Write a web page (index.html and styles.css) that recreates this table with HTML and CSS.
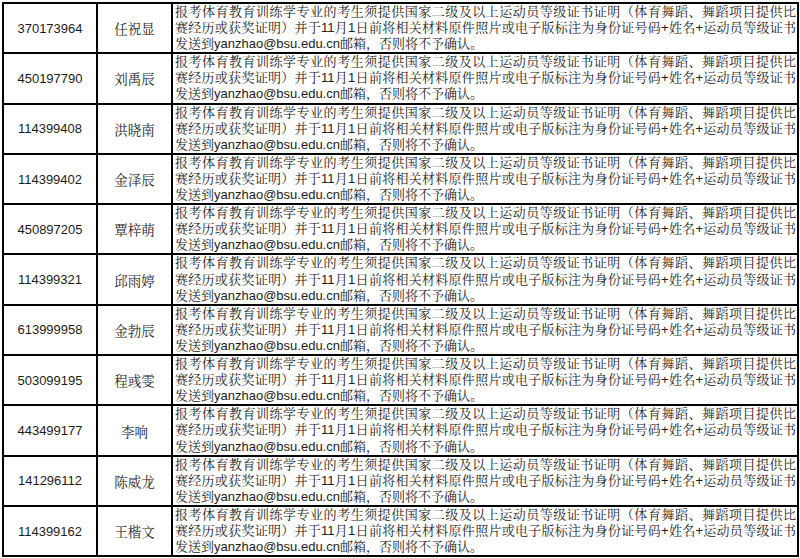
FILE: index.html
```html
<!DOCTYPE html>
<html lang="zh-CN">
<head>
<meta charset="utf-8">
<title>名单</title>
<link rel="stylesheet" href="styles.css">
</head>
<body>
<table class="list">
<colgroup><col class="c-id"><col class="c-name"><col class="c-note"></colgroup>
<tbody>
<tr><td class="id">370173964</td><td class="name">任祝显</td><td class="note"><div class="ln j">报考体育教育训练学专业的考生须提供国家二级及以上运动员等级证书证明（体育舞蹈、舞蹈项目提供比</div><div class="ln j">赛经历或获奖证明）并于11月1日前将相关材料原件照片或电子版标注为身份证号码+姓名+运动员等级证书</div><div class="ln">发送到yanzhao@bsu.edu.cn邮箱，否则将不予确认。</div></td></tr>
<tr><td class="id">450197790</td><td class="name">刘禹辰</td><td class="note"><div class="ln j">报考体育教育训练学专业的考生须提供国家二级及以上运动员等级证书证明（体育舞蹈、舞蹈项目提供比</div><div class="ln j">赛经历或获奖证明）并于11月1日前将相关材料原件照片或电子版标注为身份证号码+姓名+运动员等级证书</div><div class="ln">发送到yanzhao@bsu.edu.cn邮箱，否则将不予确认。</div></td></tr>
<tr><td class="id">114399408</td><td class="name">洪晓南</td><td class="note"><div class="ln j">报考体育教育训练学专业的考生须提供国家二级及以上运动员等级证书证明（体育舞蹈、舞蹈项目提供比</div><div class="ln j">赛经历或获奖证明）并于11月1日前将相关材料原件照片或电子版标注为身份证号码+姓名+运动员等级证书</div><div class="ln">发送到yanzhao@bsu.edu.cn邮箱，否则将不予确认。</div></td></tr>
<tr><td class="id">114399402</td><td class="name">金泽辰</td><td class="note"><div class="ln j">报考体育教育训练学专业的考生须提供国家二级及以上运动员等级证书证明（体育舞蹈、舞蹈项目提供比</div><div class="ln j">赛经历或获奖证明）并于11月1日前将相关材料原件照片或电子版标注为身份证号码+姓名+运动员等级证书</div><div class="ln">发送到yanzhao@bsu.edu.cn邮箱，否则将不予确认。</div></td></tr>
<tr><td class="id">450897205</td><td class="name">覃梓萌</td><td class="note"><div class="ln j">报考体育教育训练学专业的考生须提供国家二级及以上运动员等级证书证明（体育舞蹈、舞蹈项目提供比</div><div class="ln j">赛经历或获奖证明）并于11月1日前将相关材料原件照片或电子版标注为身份证号码+姓名+运动员等级证书</div><div class="ln">发送到yanzhao@bsu.edu.cn邮箱，否则将不予确认。</div></td></tr>
<tr><td class="id">114399321</td><td class="name">邱雨婷</td><td class="note"><div class="ln j">报考体育教育训练学专业的考生须提供国家二级及以上运动员等级证书证明（体育舞蹈、舞蹈项目提供比</div><div class="ln j">赛经历或获奖证明）并于11月1日前将相关材料原件照片或电子版标注为身份证号码+姓名+运动员等级证书</div><div class="ln">发送到yanzhao@bsu.edu.cn邮箱，否则将不予确认。</div></td></tr>
<tr><td class="id">613999958</td><td class="name">金勃辰</td><td class="note"><div class="ln j">报考体育教育训练学专业的考生须提供国家二级及以上运动员等级证书证明（体育舞蹈、舞蹈项目提供比</div><div class="ln j">赛经历或获奖证明）并于11月1日前将相关材料原件照片或电子版标注为身份证号码+姓名+运动员等级证书</div><div class="ln">发送到yanzhao@bsu.edu.cn邮箱，否则将不予确认。</div></td></tr>
<tr><td class="id">503099195</td><td class="name">程彧雯</td><td class="note"><div class="ln j">报考体育教育训练学专业的考生须提供国家二级及以上运动员等级证书证明（体育舞蹈、舞蹈项目提供比</div><div class="ln j">赛经历或获奖证明）并于11月1日前将相关材料原件照片或电子版标注为身份证号码+姓名+运动员等级证书</div><div class="ln">发送到yanzhao@bsu.edu.cn邮箱，否则将不予确认。</div></td></tr>
<tr><td class="id">443499177</td><td class="name">李响</td><td class="note"><div class="ln j">报考体育教育训练学专业的考生须提供国家二级及以上运动员等级证书证明（体育舞蹈、舞蹈项目提供比</div><div class="ln j">赛经历或获奖证明）并于11月1日前将相关材料原件照片或电子版标注为身份证号码+姓名+运动员等级证书</div><div class="ln">发送到yanzhao@bsu.edu.cn邮箱，否则将不予确认。</div></td></tr>
<tr><td class="id">141296112</td><td class="name">陈威龙</td><td class="note"><div class="ln j">报考体育教育训练学专业的考生须提供国家二级及以上运动员等级证书证明（体育舞蹈、舞蹈项目提供比</div><div class="ln j">赛经历或获奖证明）并于11月1日前将相关材料原件照片或电子版标注为身份证号码+姓名+运动员等级证书</div><div class="ln">发送到yanzhao@bsu.edu.cn邮箱，否则将不予确认。</div></td></tr>
<tr><td class="id">114399162</td><td class="name">王楷文</td><td class="note"><div class="ln j">报考体育教育训练学专业的考生须提供国家二级及以上运动员等级证书证明（体育舞蹈、舞蹈项目提供比</div><div class="ln j">赛经历或获奖证明）并于11月1日前将相关材料原件照片或电子版标注为身份证号码+姓名+运动员等级证书</div><div class="ln">发送到yanzhao@bsu.edu.cn邮箱，否则将不予确认。</div></td></tr>
</tbody>
</table>
</body>
</html>
```
FILE: styles.css
```css
html, body {
  margin: 0;
  padding: 0;
  background: #fff;
}
body {
  padding: 2px 0 0 2px;
  color: #1c1c1c;
  font-family: "Liberation Sans", "Noto Sans CJK SC", sans-serif;
}
.list {
  border-collapse: collapse;
  table-layout: fixed;
  width: 797px;
}
.c-id { width: 94px; }
.c-name { width: 75px; }
.list td {
  border: 2px solid #000;
  padding: 0;
  height: 48.3px;
  vertical-align: middle;
  overflow: hidden;
}
.id {
  text-align: center;
  font-size: 13px;
}
.name {
  text-align: center;
  font-size: 13.5px;
  font-family: "Noto Serif CJK SC", "Noto Sans CJK SC", serif;
  color: #2a2a2a;
}
.list td.note {
  font-size: 13px;
  font-family: "Liberation Sans", "Noto Serif CJK SC", "Noto Sans CJK SC", serif;
  padding: 0 1px 0 2px;
  vertical-align: top;
}
.ln {
  line-height: 16.1px;
  height: 16.1px;
  white-space: nowrap;
  overflow: hidden;
}
.ln.j {
  white-space: normal;
  text-align: justify;
  text-align-last: justify;
}
```
